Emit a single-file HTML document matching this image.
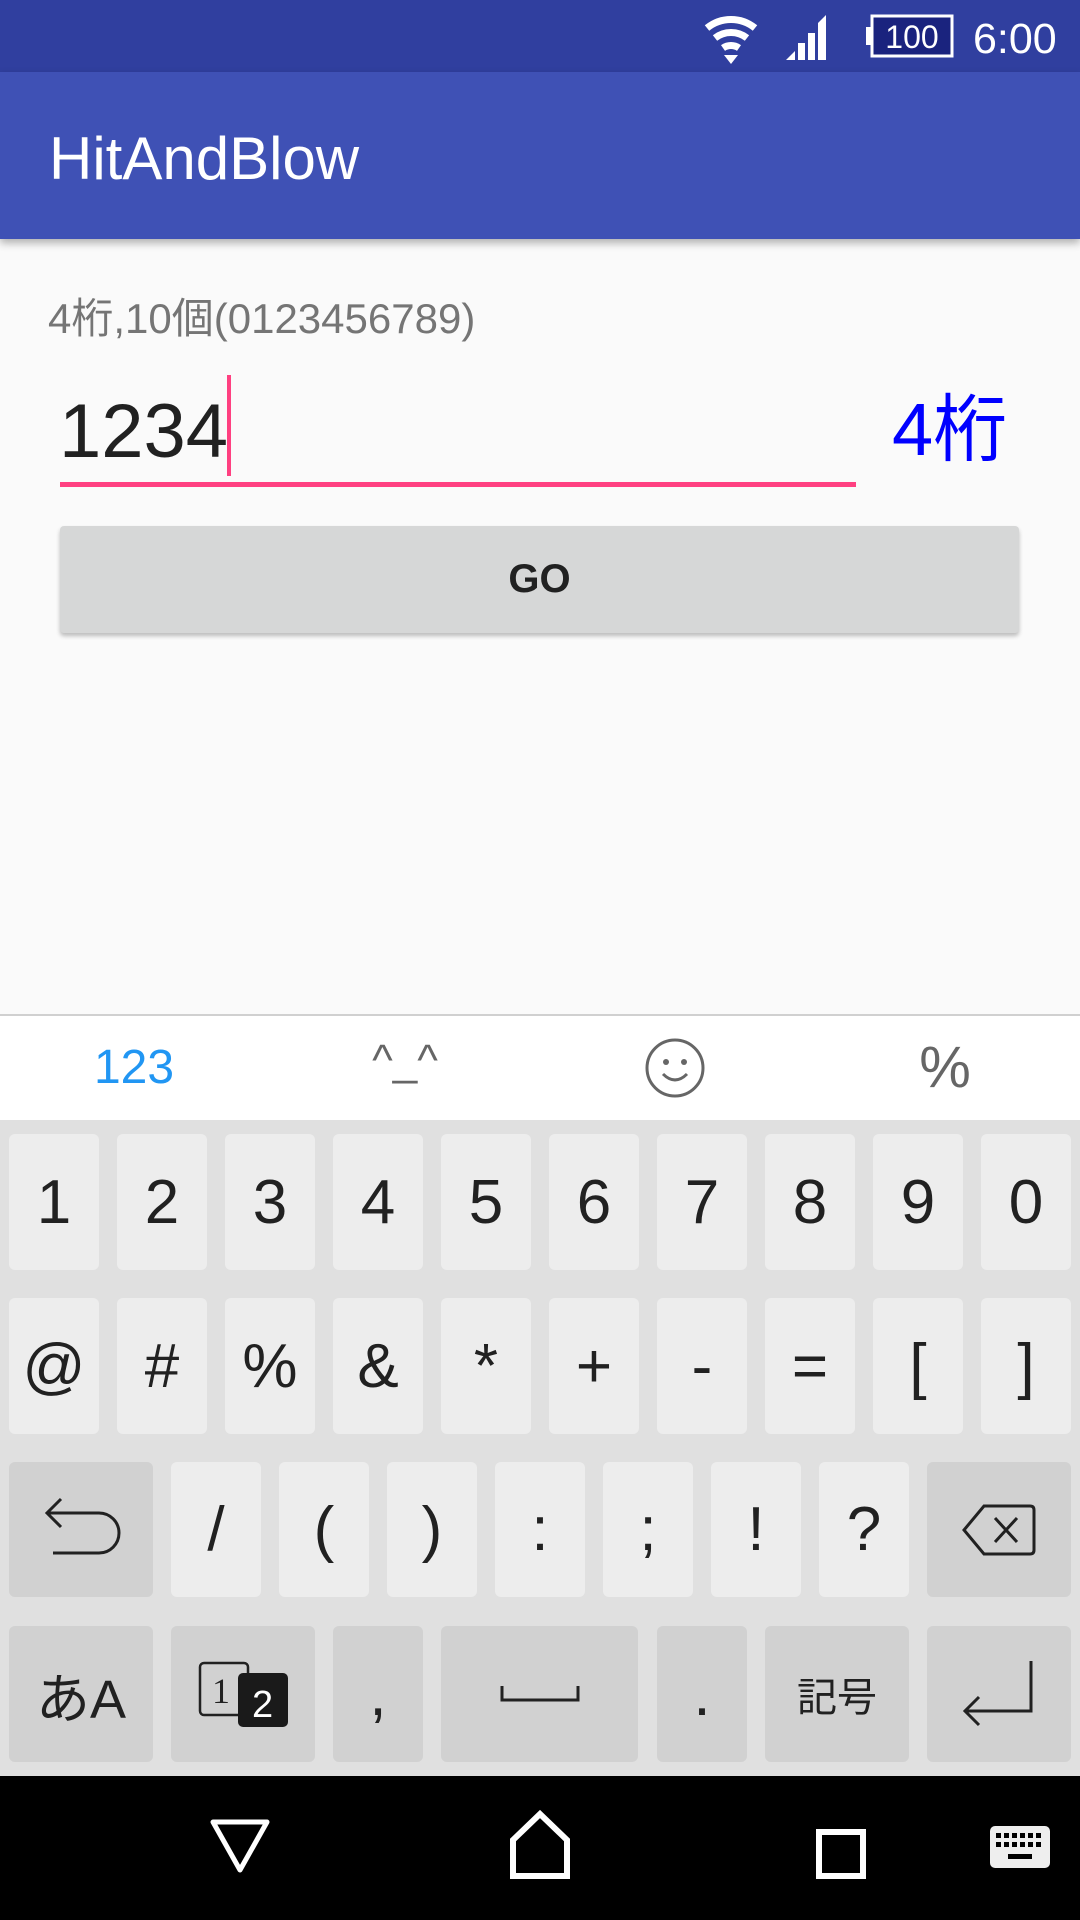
<!DOCTYPE html>
<html><head><meta charset="utf-8"><style>
*{margin:0;padding:0;box-sizing:border-box}
body{width:1080px;height:1920px;background:#FAFAFA;position:relative;overflow:hidden;font-family:"Liberation Sans","Noto Sans CJK JP",sans-serif}
.a{position:absolute}
.k{position:absolute;background:#EDEDED;border-radius:6px;color:#212121;font-size:62px;display:flex;align-items:center;justify-content:center;font-family:"Liberation Sans","Noto Sans CJK JP",sans-serif}
.d{background:#D1D1D1}
</style></head><body>
<div class="a" style="left:0;top:0;width:1080px;height:72px;background:#303F9F"></div>
<svg class="a" style="left:700px;top:10px" width="360" height="56">
<g fill="none" stroke="#fff" stroke-width="7">
<path d="M7 18 A38 38 0 0 1 55 18"/>
<path d="M15 28 A26 26 0 0 1 47 28"/>
<path d="M23 38 A14 14 0 0 1 39 38"/>
</g>
<path d="M24 45 L38 45 L31 54 Z" fill="#fff"/>
<g fill="#fff"><path d="M86 50 L95 41 L95 50Z"/><rect x="98" y="33" width="7" height="17"/><rect x="108" y="23" width="7" height="27"/><path d="M118 13 L126 5 L126 50 L118 50Z"/></g>
<rect x="172" y="6" width="80" height="40" fill="#1A237E" stroke="#fff" stroke-width="3"/>
<rect x="166" y="17" width="7" height="18" fill="#fff"/>
<text x="212" y="38" fill="#fff" font-size="32" text-anchor="middle" font-family="Liberation Sans">100</text>
<text x="273" y="43" fill="#fff" font-size="43" font-family="Liberation Sans">6:00</text>
</svg>
<div class="a" style="left:0;top:72px;width:1080px;height:167px;background:#3F51B5;box-shadow:0 4px 8px rgba(0,0,0,.3)"></div>
<div class="a" style="left:49px;top:124px;color:#fff;font-size:60px;line-height:70px">HitAndBlow</div>
<div class="a" style="left:48px;top:294px;color:#757575;font-size:42px;line-height:50px">4桁,10個(0123456789)</div>
<div class="a" style="left:59px;top:387px;color:#212121;font-size:76px;line-height:90px">1234</div>
<div class="a" style="left:227px;top:375px;width:4px;height:101px;background:#FF4081"></div>
<div class="a" style="left:60px;top:482px;width:796px;height:5px;background:#FF4081"></div>
<div class="a" style="left:892px;top:385px;color:#0000FF;font-size:74px;line-height:90px">4桁</div>
<div class="a" style="left:60px;top:526px;width:959px;height:107px;background:#D6D7D7;border-radius:4px;box-shadow:0 3px 4px rgba(0,0,0,.25);display:flex;align-items:center;justify-content:center;font-size:40px;font-weight:bold;color:#212121">GO</div>
<div class="a" style="left:0;top:1014px;width:1080px;height:106px;background:#fff;border-top:2px solid #D0D0D0"></div>
<div class="a" style="left:84px;top:1040px;width:100px;text-align:center;color:#2196F3;font-size:48px">123</div>
<div class="a" style="left:365px;top:1036px;width:80px;text-align:center;color:#666;font-size:44px">^_^</div>
<svg class="a" style="left:645px;top:1038px" width="60" height="60"><circle cx="30" cy="30" r="28" fill="none" stroke="#666" stroke-width="3"/><circle cx="21" cy="24" r="3" fill="#666"/><circle cx="39" cy="24" r="3" fill="#666"/><path d="M18 36 Q30 48 42 36" fill="none" stroke="#666" stroke-width="3"/></svg>
<div class="a" style="left:905px;top:1034px;width:80px;text-align:center;color:#666;font-size:58px">%</div>
<div class="a" style="left:0;top:1120px;width:1080px;height:656px;background:#E0E0E0"></div>
<div class="k" style="left:9px;top:1134px;width:90px;height:136px">1</div>
<div class="k" style="left:117px;top:1134px;width:90px;height:136px">2</div>
<div class="k" style="left:225px;top:1134px;width:90px;height:136px">3</div>
<div class="k" style="left:333px;top:1134px;width:90px;height:136px">4</div>
<div class="k" style="left:441px;top:1134px;width:90px;height:136px">5</div>
<div class="k" style="left:549px;top:1134px;width:90px;height:136px">6</div>
<div class="k" style="left:657px;top:1134px;width:90px;height:136px">7</div>
<div class="k" style="left:765px;top:1134px;width:90px;height:136px">8</div>
<div class="k" style="left:873px;top:1134px;width:90px;height:136px">9</div>
<div class="k" style="left:981px;top:1134px;width:90px;height:136px">0</div>
<div class="k" style="left:9px;top:1298px;width:90px;height:136px">@</div>
<div class="k" style="left:117px;top:1298px;width:90px;height:136px">#</div>
<div class="k" style="left:225px;top:1298px;width:90px;height:136px">%</div>
<div class="k" style="left:333px;top:1298px;width:90px;height:136px">&amp;</div>
<div class="k" style="left:441px;top:1298px;width:90px;height:136px">*</div>
<div class="k" style="left:549px;top:1298px;width:90px;height:136px">+</div>
<div class="k" style="left:657px;top:1298px;width:90px;height:136px">-</div>
<div class="k" style="left:765px;top:1298px;width:90px;height:136px">=</div>
<div class="k" style="left:873px;top:1298px;width:90px;height:136px">[</div>
<div class="k" style="left:981px;top:1298px;width:90px;height:136px">]</div>
<div class="k d" style="left:9px;top:1462px;width:144px;height:135px"><svg width="80" height="70"><path d="M20 4 L6 18 L20 32 M6 18 L58 18 A20 20 0 0 1 58 58 L12 58" fill="none" stroke="#212121" stroke-width="3"/></svg></div>
<div class="k" style="left:171px;top:1462px;width:90px;height:135px">/</div>
<div class="k" style="left:279px;top:1462px;width:90px;height:135px">(</div>
<div class="k" style="left:387px;top:1462px;width:90px;height:135px">)</div>
<div class="k" style="left:495px;top:1462px;width:90px;height:135px">:</div>
<div class="k" style="left:603px;top:1462px;width:90px;height:135px">;</div>
<div class="k" style="left:711px;top:1462px;width:90px;height:135px">!</div>
<div class="k" style="left:819px;top:1462px;width:90px;height:135px">?</div>
<div class="k d" style="left:927px;top:1462px;width:144px;height:135px"><svg width="74" height="52"><path d="M22 2 L68 2 Q72 2 72 6 L72 46 Q72 50 68 50 L22 50 L2 26 Z" fill="none" stroke="#212121" stroke-width="3"/><path d="M33 14 L55 38 M55 14 L33 38" stroke="#212121" stroke-width="3"/></svg></div>
<div class="k d" style="left:9px;top:1626px;width:144px;height:136px;font-size:54px">あA</div>
<div class="k d" style="left:171px;top:1626px;width:144px;height:136px"><svg width="90" height="66"><rect x="2" y="2" width="48" height="52" rx="4" fill="none" stroke="#212121" stroke-width="2.5"/><text x="14" y="42" font-size="36" font-family="Liberation Serif" fill="#212121">1</text><rect x="40" y="12" width="50" height="54" rx="5" fill="#1a1a1a"/><text x="54" y="56" font-size="38" font-family="Liberation Sans" fill="#fff">2</text></svg></div>
<div class="k d" style="left:333px;top:1626px;width:90px;height:136px">,</div>
<div class="k d" style="left:441px;top:1626px;width:197px;height:136px"><svg width="80" height="20"><path d="M2 2 L2 16 L78 16 L78 2" fill="none" stroke="#212121" stroke-width="3"/></svg></div>
<div class="k d" style="left:657px;top:1626px;width:90px;height:136px">.</div>
<div class="k d" style="left:765px;top:1626px;width:144px;height:136px;font-size:40px;font-family:'Noto Sans CJK JP',sans-serif">記号</div>
<div class="k d" style="left:927px;top:1626px;width:144px;height:136px"><svg width="80" height="70"><path d="M72 2 L72 52 L6 52 M20 38 L6 52 L20 66" fill="none" stroke="#212121" stroke-width="3"/></svg></div>
<div class="a" style="left:0;top:1776px;width:1080px;height:144px;background:#000"></div>
<svg class="a" style="left:0;top:1776px" width="1080" height="144">
<path d="M213 46 L267 46 L240 94 Z" fill="none" stroke="#fff" stroke-width="5" stroke-linejoin="round"/>
<path d="M513 100 L513 64 L540 38 L567 64 L567 100 Z" fill="none" stroke="#fff" stroke-width="6"/>
<rect x="819" y="56" width="44" height="44" fill="none" stroke="#fff" stroke-width="6"/>
<rect x="990" y="50" width="60" height="42" rx="5" fill="#eee"/>
<g fill="#000"><rect x="996" y="57" width="5" height="5"/><rect x="1004" y="57" width="5" height="5"/><rect x="1012" y="57" width="5" height="5"/><rect x="1020" y="57" width="5" height="5"/><rect x="1028" y="57" width="5" height="5"/><rect x="1036" y="57" width="5" height="5"/><rect x="996" y="66" width="5" height="5"/><rect x="1004" y="66" width="5" height="5"/><rect x="1012" y="66" width="5" height="5"/><rect x="1020" y="66" width="5" height="5"/><rect x="1028" y="66" width="5" height="5"/><rect x="1036" y="66" width="5" height="5"/><rect x="1008" y="78" width="24" height="5"/></g>
</svg>
</body></html>
